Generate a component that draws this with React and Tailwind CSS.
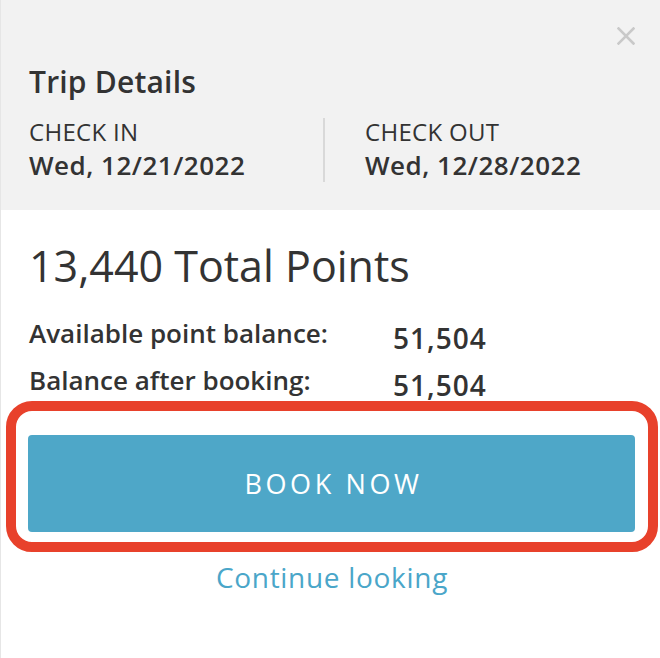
import React from "react";

function CloseIcon() {
  return (
    <svg width="18" height="18" viewBox="0 0 18 18" aria-hidden="true">
      <path d="M1.5 1.5 L16.5 16.5 M16.5 1.5 L1.5 16.5" stroke="#c9c9c9" strokeWidth="2.6" strokeLinecap="square" fill="none" />
    </svg>
  );
}

export default function App() {
  return (
    <div className="relative w-[660px] h-[658px] overflow-hidden bg-white border-l border-[#e6e6e6] font-['Open_Sans',sans-serif] text-[#333333]">
      {/* Header */}
      <div className="relative h-[210px] bg-[#f2f2f2] pl-[28px] pt-[67px]">
        <button className="absolute left-[616px] top-[27px] w-[18px] h-[18px] p-0" aria-label="Close">
          <CloseIcon />
        </button>
        <h2 className="text-[30px] leading-none font-semibold tracking-[0.2px]">Trip Details</h2>
        <div className="mt-[21px] flex items-start">
          <div className="w-[294px] pt-[2px]">
            <div className="text-[24px] leading-none font-normal tracking-[0.3px]">CHECK IN</div>
            <div className="mt-[8px] text-[26px] leading-none font-semibold tracking-[0.5px]">Wed, 12/21/2022</div>
          </div>
          <div className="w-[2px] h-[64px] bg-[#d9d9d9]"></div>
          <div className="pl-[40px] pt-[2px]">
            <div className="text-[24px] leading-none font-normal tracking-[0.3px]">CHECK OUT</div>
            <div className="mt-[8px] text-[26px] leading-none font-semibold tracking-[0.5px]">Wed, 12/28/2022</div>
          </div>
        </div>
      </div>

      {/* Body */}
      <div className="pl-[28px] pt-[34px]">
        <div className="text-[43px] leading-none font-normal">13,440 Total Points</div>

        <div className="mt-[33px] flex items-start">
          <div className="w-[364px] text-[26px] leading-none font-semibold">Available point balance:</div>
          <div className="mt-[4px] text-[28px] leading-none font-semibold tracking-[1px]">51,504</div>
        </div>
        <div className="mt-[15px] flex items-start">
          <div className="w-[364px] text-[26px] leading-none font-semibold">Balance after booking:</div>
          <div className="mt-[4px] text-[28px] leading-none font-semibold tracking-[1px]">51,504</div>
        </div>

        <button className="-ml-px mt-[36px] w-[607px] h-[97px] rounded-[4px] bg-[#4ea7c8] text-white text-[27px] leading-none font-normal tracking-[3.6px] pl-[4px] flex items-center justify-center">
          BOOK NOW
        </button>
      </div>

      <div className="mt-[31px] text-center pl-[3px] text-[28px] leading-none font-normal tracking-[0.7px] text-[#4aa6c9]">
        Continue looking
      </div>

      {/* Annotation outline */}
      <div className="absolute left-[5px] top-[401px] w-[652px] h-[151px] rounded-[26px] border-[10px] border-[#e8412b] pointer-events-none"></div>
    </div>
  );
}
